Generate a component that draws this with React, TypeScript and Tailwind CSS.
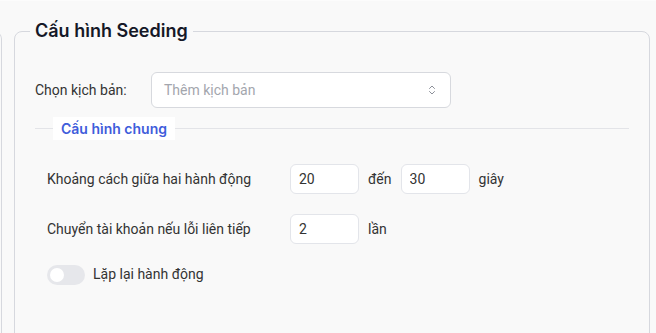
import { ChevronsUpDown } from "lucide-react";

function NumberBox({ value }: { value: string }) {
  return (
    <input
      type="text"
      defaultValue={value}
      className="h-[30px] w-[69px] rounded-md border border-[#e3e5ea] bg-white px-[8px] text-[14px] text-[#333] outline-none"
    />
  );
}

export default function App() {
  return (
    <div
      className="flex h-[333px] w-full items-start overflow-hidden border-t border-[#fcfcfc] bg-[#f9f9f9] text-[14px] text-[#333]"
      style={{ fontFamily: "Roboto, 'Noto Sans', sans-serif" }}
    >
      {/* edge of the previous card */}
      <div className="ml-[-9px] mt-[30px] h-[400px] w-[11px] shrink-0 rounded-tr-lg border-r border-t border-[#d6d8de]" />

      <fieldset className="ml-[12px] mr-[6px] mt-[18px] flex-1 rounded-lg border border-[#d6d8de] pl-[15px] pr-[20px]">
        <legend className="px-[5px] font-['Inter'] text-[18px] font-semibold leading-6 text-[#151827]">
          Cấu hình Seeding
        </legend>

        <div className="pb-[80px] pl-[5px]">
          <div className="mt-[29px] flex items-center">
            <span className="w-[116px]">Chọn kịch bản:</span>
            <button
              type="button"
              className="flex h-[36px] w-[300px] items-center justify-between rounded-md border border-[#d7d9de] bg-white pl-[12px] pr-[12px] text-left text-[#a3a6ad]"
            >
              Thêm kịch bản
              <ChevronsUpDown size={12} className="text-[#8c9099]" />
            </button>
          </div>

          <div className="mt-[9px] flex items-center">
            <div className="h-px w-[18px] bg-[#e3e4e8]" />
            <span className="bg-white px-[8px] py-[1px] font-['Inter'] text-[14px] font-semibold text-[#3f5ddb]">
              Cấu hình chung
            </span>
            <div className="h-px flex-1 bg-[#e3e4e8]" />
          </div>

          <div className="pl-[12px]">
            <div className="mt-[24px] flex items-center">
              <span className="w-[243px]">Khoảng cách giữa hai hành động</span>
              <NumberBox value="20" />
              <span className="px-[9px]">đến</span>
              <NumberBox value="30" />
              <span className="pl-[9px]">giây</span>
            </div>

            <div className="mt-[20px] flex items-center">
              <span className="w-[243px]">Chuyển tài khoản nếu lỗi liên tiếp</span>
              <NumberBox value="2" />
              <span className="pl-[9px]">lần</span>
            </div>

            <div className="mt-[20px] flex items-center gap-[8px]">
              <span className="flex h-[20px] w-[38px] items-center rounded-full bg-[#e6e7eb] px-[3px]">
                <span className="h-[14px] w-[14px] rounded-full bg-white" />
              </span>
              <span>Lặp lại hành động</span>
            </div>
          </div>
        </div>
      </fieldset>
    </div>
  );
}
